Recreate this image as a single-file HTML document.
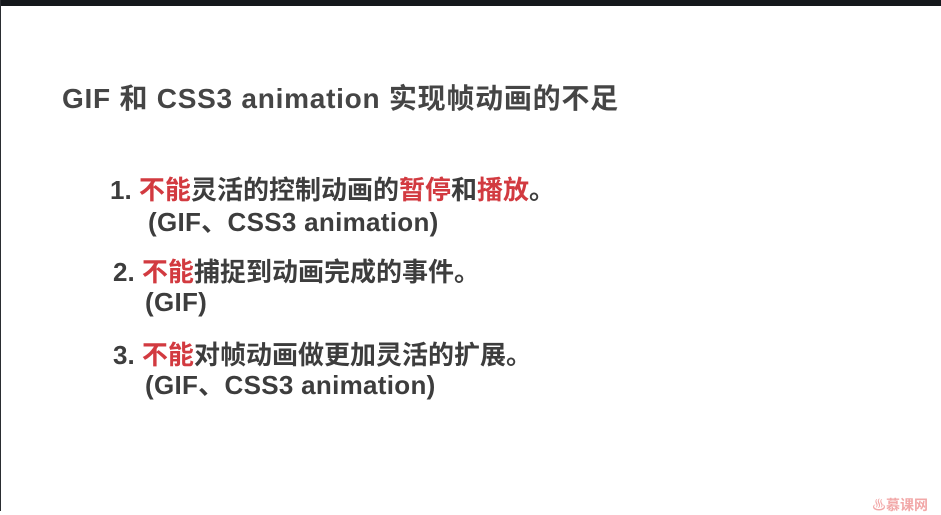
<!DOCTYPE html>
<html><head><meta charset="utf-8"><style>
html,body{margin:0;padding:0;}
body{width:941px;height:511px;background:#fff;position:relative;overflow:hidden;font-family:"Liberation Sans","Noto Sans CJK SC",sans-serif;}
.top{position:absolute;left:0;top:0;width:941px;height:6px;background:#15181c;}
.l{position:absolute;left:0;top:0;width:1px;height:511px;background:#2a2d31;}
.t{position:absolute;white-space:nowrap;font-weight:bold;color:#3d3d3d;line-height:1;}
.r{color:#d23a40;}
.title{left:62px;top:85px;font-size:28px;color:#454545;letter-spacing:0.75px;}
.i{font-size:26px;}
.p{letter-spacing:0.3px;}
.logo{position:absolute;left:872px;top:495px;font-size:14px;color:#f2a8a8;font-weight:bold;}
</style></head><body>
<div class="top"></div><div class="l"></div>
<div class="t title">GIF 和 CSS3 animation 实现帧动画的不足</div>
<div class="t i" style="left:110px;top:177px">1. <span class="r">不能</span>灵活的控制动画的<span class="r">暂停</span>和<span class="r">播放</span>。</div>
<div class="t i p" style="left:148px;top:209px">(GIF、CSS3 animation)</div>
<div class="t i" style="left:113px;top:259px">2. <span class="r">不能</span>捕捉到动画完成的事件。</div>
<div class="t i p" style="left:145px;top:289px">(GIF)</div>
<div class="t i" style="left:113px;top:342px">3. <span class="r">不能</span>对帧动画做更加灵活的扩展。</div>
<div class="t i p" style="left:145px;top:372px">(GIF、CSS3 animation)</div>
<div class="logo">♨慕课网</div>
</body></html>
